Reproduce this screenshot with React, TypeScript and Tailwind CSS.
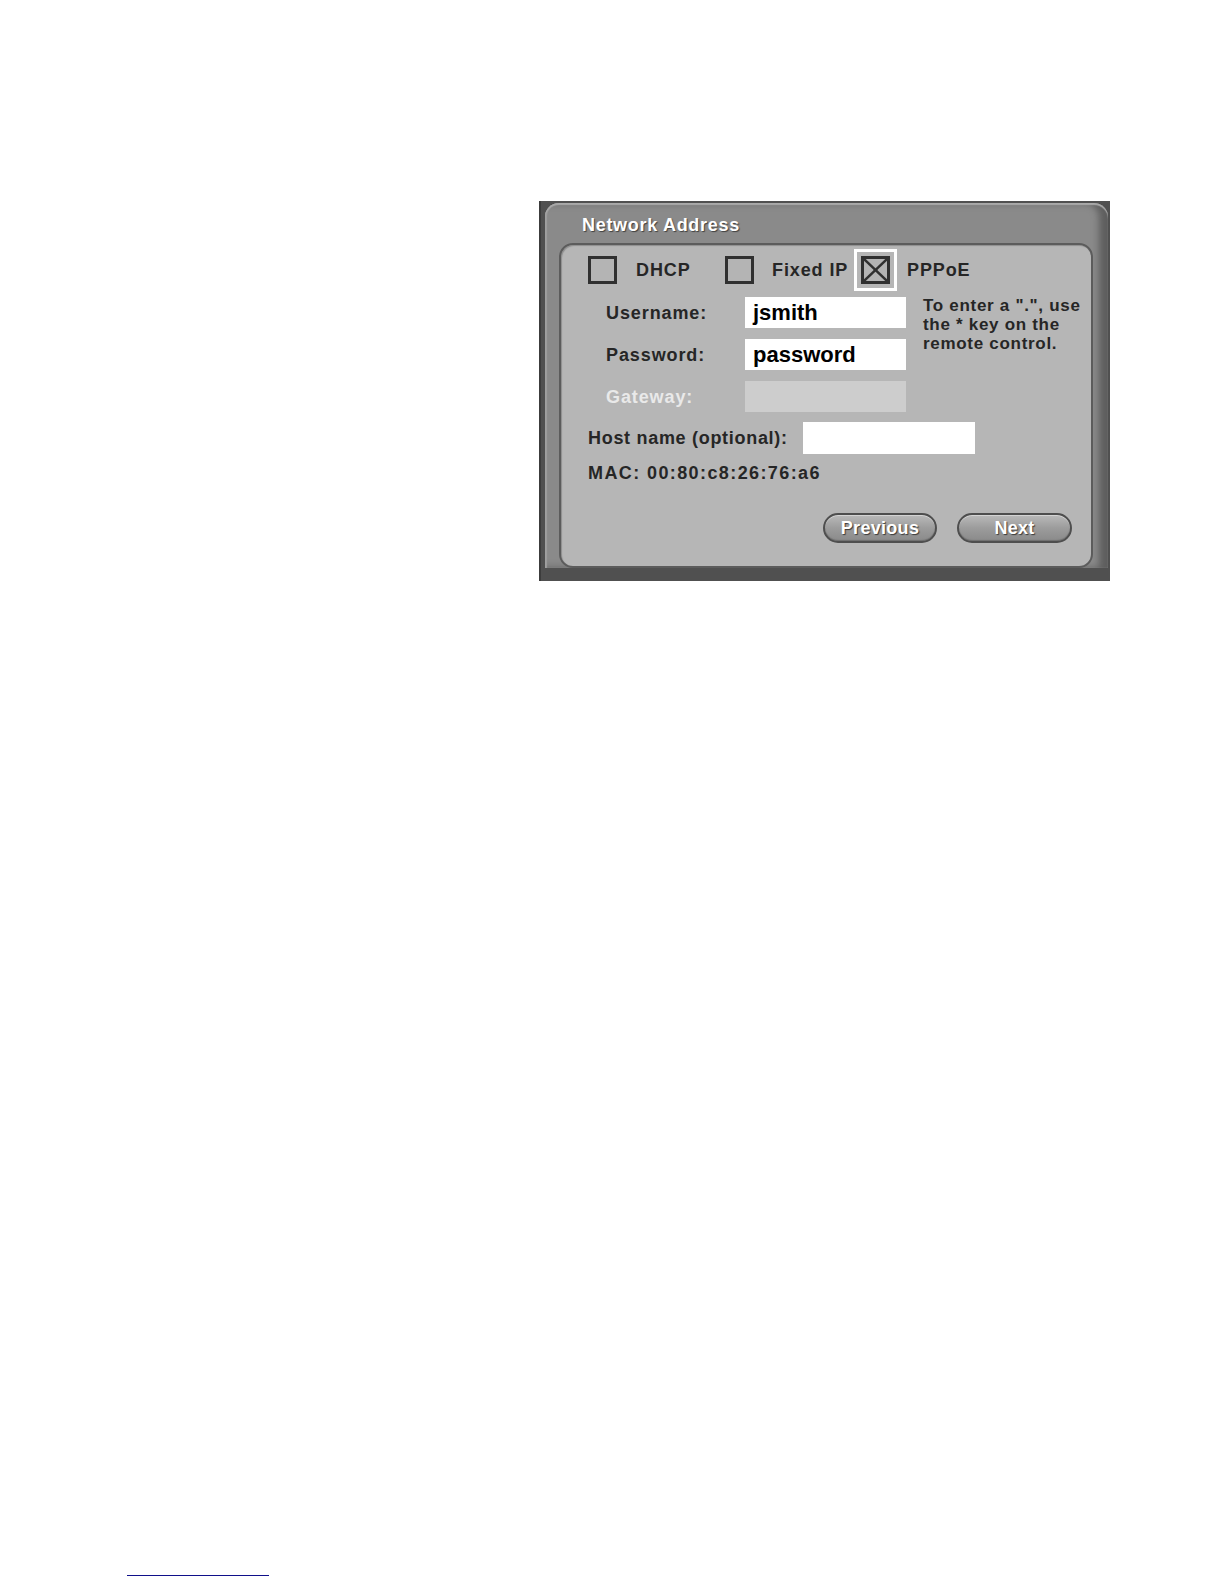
import React from "react";

function Box({ checked = false }: { checked?: boolean }) {
  return (
    <div className="w-[29px] h-[28px] border-[3px] border-[#303030] bg-[#b4b4b4] flex items-center justify-center">
      {checked && (
        <svg width="23" height="22" viewBox="0 0 23 22" className="block">
          <line x1="0" y1="0" x2="23" y2="22" stroke="#303030" strokeWidth="2.4" />
          <line x1="23" y1="0" x2="0" y2="22" stroke="#303030" strokeWidth="2.4" />
        </svg>
      )}
    </div>
  );
}

function Btn({ label, w }: { label: string; w: string }) {
  return (
    <div
      className={`${w} h-[30px] rounded-full border-2 border-[#4e4e4e] bg-gradient-to-b from-[#bababa] via-[#9c9c9c] to-[#8a8a8a] shadow-[inset_0_1px_0_#d4d4d4,inset_0_-1px_1px_#6e6e6e] flex items-center justify-center text-white text-[18px] font-bold leading-[20px] tracking-[0.3px] [text-shadow:1px_1px_1px_#3a3a3a]`}
    >
      {label}
    </div>
  );
}

export default function App() {
  const label = "text-[18px] font-bold leading-[20px] tracking-[0.9px] text-[#262626]";
  return (
    <div className="w-[1224px] h-[1584px] bg-white flex flex-col font-['Liberation_Sans',Arial,sans-serif]">
      {/* Frame */}
      <div className="ml-[539px] mt-[201px] w-[571px] h-[380px] bg-[#505050] flex flex-col pl-[6px] pr-[2px] pt-[2px] pb-[13px] shadow-[inset_2px_0_0_#3c3c3c]">
        {/* Bezel */}
        <div className="flex-1 rounded-t-[14px] bg-[#8a8a8a] shadow-[inset_0_2px_1px_#a9a9a9,inset_2px_0_1px_#9e9e9e,inset_-9px_0_7px_#5e5e5e] flex flex-col pl-[14px] pr-[15px]">
          <div className="pt-[12px] pl-[23px] text-white text-[18px] font-bold leading-[20px] tracking-[0.7px] [text-shadow:1px_1px_1px_#404040]">
            Network Address
          </div>
          {/* Inner panel */}
          <div className="mt-[8px] flex-1 rounded-[14px] border-2 border-[#5c5c5c] bg-[#b6b6b6] shadow-[inset_1px_1px_1px_#8e8e8e] flex flex-col">
            {/* Radio row */}
            <div className="mt-[4px] h-[42px] pl-[27px] flex items-center">
              <Box />
              <span className={`${label} ml-[19px] w-[89px]`}>DHCP</span>
              <Box />
              <span className={`${label} ml-[18px] w-[82px] whitespace-nowrap`}>Fixed IP</span>
              <div className="w-[43px] h-[42px] border-[3px] border-white flex items-center justify-center">
                <Box checked />
              </div>
              <span className={`${label} ml-[10px]`}>PPPoE</span>
            </div>

            {/* Form rows + help */}
            <div className="mt-[6px] pl-[45px] flex">
              <div className="flex flex-col gap-[11px]">
                <div className="h-[31px] flex items-center">
                  <span className={`${label} w-[139px]`}>Username:</span>
                  <div className="w-[161px] h-[31px] bg-white flex items-center pl-[8px] text-[22px] font-bold leading-[24px] text-black">
                    jsmith
                  </div>
                </div>
                <div className="h-[31px] flex items-center">
                  <span className={`${label} w-[139px]`}>Password:</span>
                  <div className="w-[161px] h-[31px] bg-white flex items-center pl-[8px] text-[22px] font-bold leading-[24px] text-black">
                    password
                  </div>
                </div>
                <div className="h-[31px] flex items-center">
                  <span className="w-[139px] text-[18px] font-bold leading-[20px] tracking-[0.9px] text-[#e9e9e9]">
                    Gateway:
                  </span>
                  <div className="w-[161px] h-[31px] bg-[#cdcdcd]" />
                </div>
              </div>
              <div className="ml-[17px] mt-[-1px] text-[17px] font-bold leading-[19px] tracking-[0.7px] text-[#262626] whitespace-nowrap">
                To enter a ".", use
                <br />
                the * key on the
                <br />
                remote control.
              </div>
            </div>

            {/* Host name */}
            <div className="mt-[10px] pl-[27px] h-[32px] flex items-center">
              <span className="w-[215px] whitespace-nowrap text-[18px] font-bold leading-[20px] tracking-[0.7px] text-[#262626]">
                Host name (optional):
              </span>
              <div className="w-[172px] h-[32px] bg-white" />
            </div>

            {/* MAC */}
            <div className="mt-[9px] pl-[27px] text-[18px] font-bold leading-[20px] tracking-[1.4px] text-[#262626] whitespace-nowrap">
              MAC: 00:80:c8:26:76:a6
            </div>

            {/* Buttons */}
            <div className="mt-[30px] pr-[19px] flex justify-end gap-[20px]">
              <Btn label="Previous" w="w-[114px]" />
              <Btn label="Next" w="w-[115px]" />
            </div>
          </div>
        </div>
      </div>

      {/* Footnote rule */}
      <div className="mt-auto mb-[8px] ml-[127px] w-[142px] h-px bg-[#10108a]" />
    </div>
  );
}
